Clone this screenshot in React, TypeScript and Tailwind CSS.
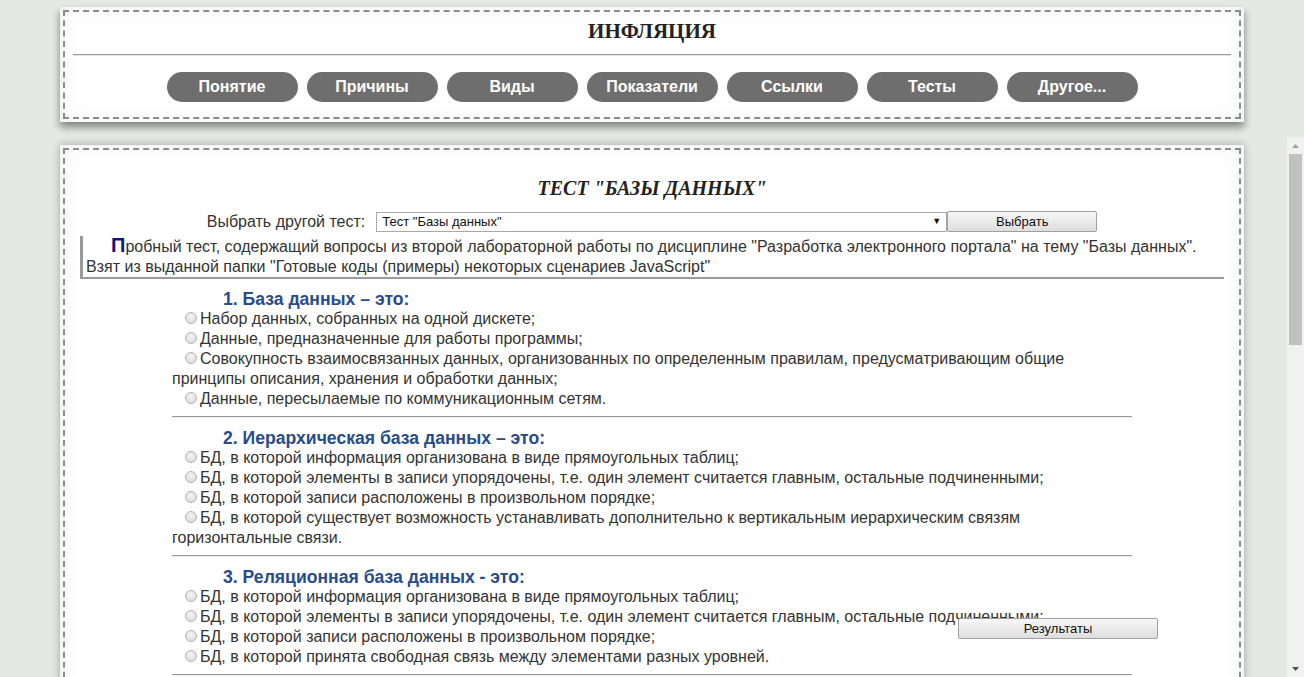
import React from "react";

const navItems = ["Понятие", "Причины", "Виды", "Показатели", "Ссылки", "Тесты", "Другое..."];

type Q = { title: string; options: string[] };

const questions: Q[] = [
  {
    title: "1. База данных – это:",
    options: [
      "Набор данных, собранных на одной дискете;",
      "Данные, предназначенные для работы программы;",
      "Совокупность взаимосвязанных данных, организованных по определенным правилам, предусматривающим общие принципы описания, хранения и обработки данных;",
      "Данные, пересылаемые по коммуникационным сетям.",
    ],
  },
  {
    title: "2. Иерархическая база данных – это:",
    options: [
      "БД, в которой информация организована в виде прямоугольных таблиц;",
      "БД, в которой элементы в записи упорядочены, т.е. один элемент считается главным, остальные подчиненными;",
      "БД, в которой записи расположены в произвольном порядке;",
      "БД, в которой существует возможность устанавливать дополнительно к вертикальным иерархическим связям горизонтальные связи.",
    ],
  },
  {
    title: "3. Реляционная база данных - это:",
    options: [
      "БД, в которой информация организована в виде прямоугольных таблиц;",
      "БД, в которой элементы в записи упорядочены, т.е. один элемент считается главным, остальные подчиненными;",
      "БД, в которой записи расположены в произвольном порядке;",
      "БД, в которой принята свободная связь между элементами разных уровней.",
    ],
  },
];

function Radio() {
  return (
    <span className="inline-block w-[12px] h-[12px] ml-[5px] mr-[3px] rounded-full border border-[#b5b5b5] bg-[radial-gradient(circle_at_50%_35%,#f4f4f4,#d6d6d6)] align-[0px]" />
  );
}

function Hr() {
  return <div className="h-0 border-t border-t-[#9a9a9a] border-b border-b-[#eeeeee]" />;
}

export default function App() {
  return (
    <div
      className="relative w-[1304px] h-[677px] overflow-hidden bg-[#e4e9e5] text-[#333]"
      style={{ fontFamily: '"Liberation Sans", Arial, sans-serif' }}
    >
      {/* Header */}
      <div className="w-[1184px] mx-auto mt-[7px] bg-white p-[3px] shadow-[0_5px_8px_rgba(0,0,0,0.45),inset_0_0_22px_rgba(0,0,0,0.07)]">
        <div className="border-2 border-dashed border-[#8c8c8c] h-[109px]">
          <div
            className="pt-[7px] h-[42px] text-center text-[21px] font-bold leading-[24px] text-[#222]"
            style={{ fontFamily: '"Liberation Serif", "Times New Roman", serif' }}
          >
            ИНФЛЯЦИЯ
          </div>
          <div className="mx-[8px] h-0 border-t border-t-[#9a9a9a] border-b border-b-[#e5e5e5]" />
          <div className="flex justify-center gap-[9px] mt-[16px]">
            {navItems.map((n) => (
              <div
                key={n}
                className="w-[131px] h-[30px] rounded-full bg-[#6e6e6e] text-white font-bold text-[16px] flex items-center justify-center"
              >
                {n}
              </div>
            ))}
          </div>
        </div>
      </div>

      {/* Content panel */}
      <div className="w-[1184px] mx-auto mt-[23px] bg-white p-[3px] shadow-[0_0_8px_rgba(0,0,0,0.3),inset_0_0_22px_rgba(0,0,0,0.07)]">
        <div className="border-2 border-dashed border-[#8c8c8c] border-b-0 h-[560px]">
          <div
            className="pt-[28px] text-center text-[20px] font-bold italic leading-[20px] text-[#222]"
            style={{ fontFamily: '"Liberation Serif", "Times New Roman", serif' }}
          >
            ТЕСТ "БАЗЫ ДАННЫХ"
          </div>
          <div className="flex justify-center items-center mt-[13px] h-[21px]">
            <span className="text-[16px] mr-[11px] text-[#333]">Выбрать другой тест:</span>
            <div className="w-[571px] h-[20px] border border-[#a9a9a9] bg-white flex items-center justify-between pl-[5px] pr-[5px] text-[13px] text-[#111]">
              <span>Тест "Базы данных"</span>
              <span className="text-[9px]">▼</span>
            </div>
            <div className="w-[150px] h-[21px] border border-[#a0a0a0] rounded-[2px] bg-[linear-gradient(#f7f7f7,#dedede)] flex items-center justify-center text-[13px] text-[#111]">
              Выбрать
            </div>
          </div>
          <div className="mx-[15px] mt-[4px] pt-[1px] border-l-[3px] border-b-2 border-[#9a9a9a] pl-[3px] text-[16px] leading-[20px] indent-[25px] text-[#333]">
            <span className="text-[20px] leading-[0px] font-bold text-[#141480]">П</span>
            робный тест, содержащий вопросы из второй лабораторной работы по дисциплине "Разработка электронного портала" на тему "Базы данных". Взят из выданной папки "Готовые коды (примеры) некоторых сценариев JavaScript"
          </div>
          <div className="w-[960px] mx-auto">
            {questions.map((q, i) => (
              <div key={i}>
                <div className="pt-[10px] pl-[51px] text-[17.6px] font-bold leading-[20px] text-[#274b8b]">{q.title}</div>
                <div className="text-[16px] leading-[20px] text-[#333] pb-[7px]">
                  {q.options.map((o, j) => (
                    <div key={j} className="indent-[8px]">
                      <Radio />
                      {o}
                    </div>
                  ))}
                </div>
                <Hr />
              </div>
            ))}
          </div>
        </div>
      </div>

      {/* Results button (fixed) */}
      <div className="absolute left-[958px] top-[618px] w-[200px] h-[21px] border border-[#a0a0a0] rounded-[2px] bg-[linear-gradient(#f7f7f7,#dedede)] flex items-center justify-center text-[13px] text-[#111]">
        Результаты
      </div>

      {/* Scrollbar */}
      <div className="absolute right-0 top-[137px] bottom-0 w-[17px] bg-[#f1f1f1] flex flex-col items-center">
        <div className="h-[17px] flex items-center justify-center">
          <svg width="7" height="4" viewBox="0 0 7 4"><path d="M0 4 L3.5 0 L7 4 Z" fill="#a3a3a3" /></svg>
        </div>
        <div className="w-[13px] h-[191px] bg-[#c1c1c1]" />
        <div className="flex-1" />
        <div className="h-[17px] flex items-center justify-center">
          <svg width="7" height="4" viewBox="0 0 7 4"><path d="M0 0 L3.5 4 L7 0 Z" fill="#505050" /></svg>
        </div>
      </div>
    </div>
  );
}
